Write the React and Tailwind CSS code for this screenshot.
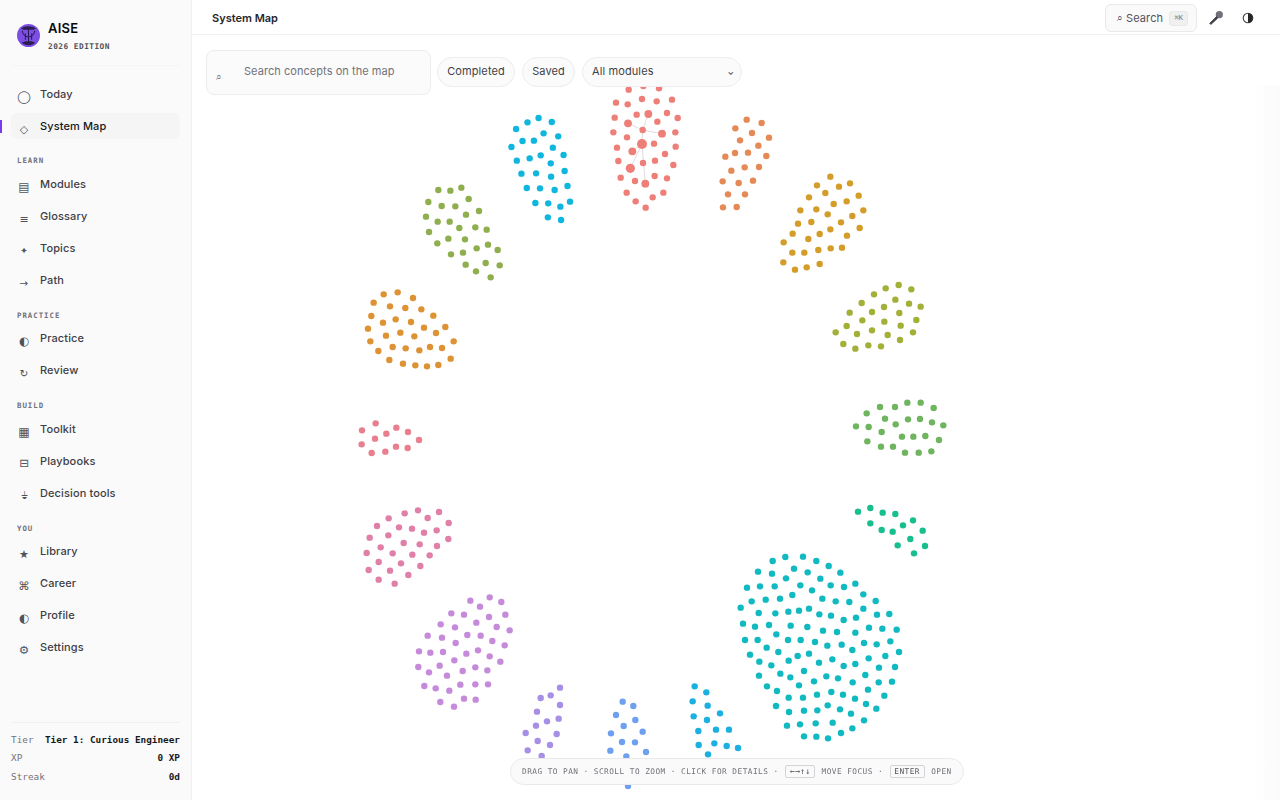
import React from 'react'

// dot clusters read off the map: origin x/y, scale x/y, then "x,y" pairs
const clusters = [
  { color: '#8fae4e', ox: 350, oy: 180, sx: 3, sy: 3, pts: '265,30 301,32 334,23 356,57 235,66 275,78 316,79 387,93 348,104 228,110 263,125 299,125 328,144 376,142 410,149 237,156 295,176 345,178 262,190 414,194 380,205 443,210 339,218 303,223 347,254 407,249 449,256 378,274 422,292' },
  { color: '#dd9233', ox: 350, oy: 180, sx: 3, sy: 3, pts: '101,343 143,337 189,354 71,368 120,379 166,384 214,388 250,407 64,408 137,418 99,428 183,426 222,443 286,441 54,446 151,458 108,467 193,469 258,459 61,484 311,484 128,501 167,505 208,511 240,501 276,504 85,513 118,540 159,551 196,556 231,559 265,555 302,536' },
  { color: '#e87f8e', ox: 350, oy: 180, sx: 3, sy: 3, pts: '77,730 139,743 36,751 174,756 109,761 75,776 207,780 35,793 138,800 173,804 106,815 65,819' },
  { color: '#e58a56', ox: 710, oy: 110, sx: 3, sy: 3, pts: '110,29 155,39 76,55 126,69 177,83 90,91 145,107 46,140 75,129 114,128 169,138 104,172 147,171 64,182 38,214 86,219 129,212 54,253 105,253 39,292 80,291' },
  { color: '#d49d2a', ox: 710, oy: 110, sx: 3, sy: 3, pts: '361,200 321,226 387,230 420,220 346,249 297,262 446,257 410,274 371,282 271,301 319,298 460,301 353,313 427,318 264,341 304,336 393,337 248,371 361,358 449,354 329,372 295,387 411,377 221,397 247,428 283,428 325,420 362,415 396,413 220,457 255,479 290,472 329,462' },
  { color: '#a3b037', ox: 710, oy: 110, sx: 3, sy: 3, pts: '566,525 527,535 604,538 492,553 556,569 455,579 597,581 632,590 522,591 419,608 486,606 568,609 457,631 523,635 619,630 410,648 572,647 486,661 377,667 441,672 609,667 533,675 570,690 400,702 475,706 513,709 436,716' },
  { color: '#10bac0', ox: 730, oy: 545, sx: 3, sy: 3, pts: '128,48 166,36 219,35 259,48 296,63 84,80 126,86 192,71 233,82 331,83 168,100 271,101 51,128 90,124 134,124 211,121 246,136 302,121 342,126 376,116 400,148 65,169 107,164 150,161 187,150 277,161 317,169 358,171 437,168 32,188 400,191 86,204 136,205 175,200 207,197 237,191 268,208 303,212 341,225 378,218 441,209 478,207 39,236 75,245 117,240 182,242 232,246 279,257 321,261 376,263 417,248 457,251 500,254 139,268 45,285 83,285 174,285 212,285 255,291 292,302 335,299 402,294 440,298 481,289 110,308 145,321 367,315 60,329 203,333 237,326 507,321 466,333 416,340 88,350 176,347 307,343 267,353 124,361 341,363 376,357 447,368 495,366 222,378 151,386 87,392 181,397 289,394 324,400 406,390 252,409 368,412 446,412 486,410 207,421 111,424 141,438 414,434 304,441 261,449 339,449 176,458 219,458 375,461 463,452 138,483 293,481 262,496 222,497 177,501 330,493 408,477 439,491 363,506 402,526 171,542 210,538 257,535 308,533 367,550 333,564 222,574 259,575 294,580' },
  { color: '#6fb45f', ox: 845, oy: 390, sx: 3, sy: 3, pts: '105,51 150,51 187,38 227,38 266,54 65,70 120,86 189,88 225,87 261,97 295,106 152,103 33,109 71,111 110,126 171,140 205,140 241,138 282,150 67,154 108,170 144,170 180,188 221,188 259,184' },
  { color: '#17bf8e', ox: 845, oy: 390, sx: 3, sy: 3, pts: '39,365 76,354 113,368 151,372 76,400 204,391 174,406 110,420 143,425 233,422 196,447 158,466 240,468 207,490' },
  { color: '#e07fa8', ox: 355, oy: 500, sx: 3, sy: 3, pts: '189,31 252,36 149,40 218,54 101,55 281,69 66,78 132,82 171,86 245,91 207,98 100,106 44,113 280,117 146,129 194,133 246,138 77,142 35,159 113,160 172,164 224,166 71,186 138,190 196,198 41,210 105,212 160,225 71,239 119,251' },
  { color: '#c58ada', ox: 355, oy: 500, sx: 3, sy: 3, pts: '404,292 346,302 439,306 375,320 289,340 327,344 451,344 402,351 364,368 257,373 300,382 425,381 464,391 337,405 377,407 218,407 261,413 412,423 302,429 449,436 192,454 226,458 264,456 369,451 334,461 404,469 298,481 436,485 254,497 190,501 361,502 397,511 323,513 222,517 276,527 316,554 361,553 399,553 208,558 242,565 283,572 327,596 362,599 256,606 297,620' },
  { color: '#0fb7de', ox: 200, oy: 40, sx: 2.8, sy: 3, pts: '948,234 917,247 985,246 885,267 962,280 1003,289 903,303 935,302 872,321 988,323 954,346 923,355 1018,345 887,362 982,370 900,401 941,400 1021,393 983,410 915,444 952,445 993,450 1029,438 939,489 975,490 1009,500 1036,485 974,532 1011,540' },
  { color: '#ee7f78', ox: 600, oy: 80, sx: 3, sy: 3, pts: '86,29 130,18 177,25 126,57 48,68 83,73 170,64 216,59 110,104 201,99 44,113 172,125 233,114 128,150 40,157 226,157 81,172 162,191 51,203 227,200 195,222 55,243 165,242 129,249 220,255 62,293 164,288 201,295 105,303 80,338 190,338 158,352 107,364 137,383' },
  { color: '#a78fe6', ox: 500, oy: 680, sx: 3, sy: 3, pts: '180,23 122,54 152,46 180,75 111,95 176,116 141,124 108,137 77,159 170,162 113,183 150,195 83,211 125,228' },
  { color: '#6fa0f0', ox: 500, oy: 680, sx: 3, sy: 3, pts: '368,65 400,78 348,105 406,120 371,138 333,160 428,155 366,186 405,187 331,212 438,216 379,229 384,318' },
  { color: '#1bb0e0', ox: 500, oy: 680, sx: 3, sy: 3, pts: '584,19 619,37 578,64 623,77 660,100 581,109 621,120 595,153 648,149 687,149 596,195 643,190 680,198 714,204 624,223' },
]

// larger nodes of the open module and the links between them
const hubs = [[145, 102, 3.9], [84, 130, 3.9], [186, 161, 3.9], [126, 192, 5], [97, 214, 3.9], [91, 265, 4.6], [136, 311, 3.9]]
const links = [[126, 192, 91, 265], [126, 192, 136, 311], [126, 192, 128, 150], [128, 150, 145, 102], [128, 150, 84, 130], [128, 150, 186, 161], [126, 192, 97, 214]]

const mono = "font-['DejaVu_Sans_Mono',monospace]"

const navTop = [
  { icon: '◯', label: 'Today', size: 'text-[12.5px]' },
  { icon: '◇', label: 'System Map', active: true, size: 'text-[11px]' },
]

const sections = [
  { title: 'LEARN', items: [
    { icon: '▤', label: 'Modules', size: 'text-[12px]' },
    { icon: '≡', label: 'Glossary', size: 'text-[11px]' },
    { icon: '✦', label: 'Topics', size: 'text-[9.5px]' },
    { icon: '→', label: 'Path', size: 'text-[10.5px]' },
  ] },
  { title: 'PRACTICE', items: [
    { icon: '◐', label: 'Practice', size: 'text-[11.5px]' },
    { icon: '↻', label: 'Review', size: 'text-[10.5px]' },
  ] },
  { title: 'BUILD', items: [
    { icon: '▦', label: 'Toolkit', size: 'text-[12px]' },
    { icon: '⊟', label: 'Playbooks', size: 'text-[11.5px]' },
    { icon: '⏚', label: 'Decision tools', size: 'text-[9.5px]' },
  ] },
  { title: 'YOU', items: [
    { icon: '★', label: 'Library', size: 'text-[11px]' },
    { icon: '⌘', label: 'Career', size: 'text-[11.5px]' },
    { icon: '◐', label: 'Profile', size: 'text-[11.5px]' },
    { icon: '⚙', label: 'Settings', size: 'text-[11.5px]' },
  ] },
]

const NavItem = ({ icon, label, active, size }) => (
  <div className={`relative flex items-center h-[26px] mb-[6px] pl-[7px] rounded-md ${active ? 'bg-[#f5f5f6] text-[#18181b]' : 'text-[#3f3f46]'}`}>
    {active && <span className="absolute left-[-11px] top-[7px] w-[2px] h-[13px] bg-[#7c3aed]" />}
    <span className={`w-[12px] mr-[10px] mt-[6px] flex justify-center font-['DejaVu_Sans',sans-serif] leading-none text-[#52525b] ${size}`}>{icon}</span>
    <span className="text-[11px] font-medium tracking-[0.01em]">{label}</span>
  </div>
)

const Logo = () => (
  <svg width="23" height="23" viewBox="0 0 22 22" className="shrink-0">
    <circle cx="11" cy="11" r="11" fill="#7c4ee4" />
    <path d="M4 4.5C7 1.5 15 1.5 18 4.5L15.5 5.5H6.5Z" fill="#2b1d52" />
    <path d="M4.5 18C8 21 14 21 17.5 18L14 16.5H8Z" fill="#2b1d52" />
    <path d="M11 3V17M5 6.5C5.5 10 8 12 11 12.5M17 6.5C16.5 10 14 12 11 12.5M8 9V15M14 9V15" stroke="#2b1d52" strokeWidth="1" fill="none" />
  </svg>
)

const Sidebar = () => (
  <aside className="w-[192px] shrink-0 h-full flex flex-col bg-[#fafafa] border-r border-[#f0f0f0] px-[11px]">
    <div className="flex items-center gap-2 pl-[6px] pt-[6px] h-[66px] border-b border-[#f5f5f5]">
      <Logo />
      <div className="mt-[1px]">
        <div className="text-[13px] font-semibold leading-4 tracking-[0.02em] text-[#09090b]">AISE</div>
        <div className={`${mono} mt-[5px] text-[7.8px] font-bold leading-3 tracking-[0.06em] text-[#52525b]`}>2026 EDITION</div>
      </div>
    </div>
    <div className="pt-[15px] mb-[2px]">
      {navTop.map((item) => <NavItem key={item.label} {...item} />)}
    </div>
    {sections.map((s) => (
      <div key={s.title} className="mt-[4px] mb-[2.5px]">
        <div className={`${mono} pl-[6px] h-[20px] pt-[4px] text-[7.4px] font-bold leading-3 tracking-[0.13em] text-[#71717a]`}>{s.title}</div>
        {s.items.map((item) => <NavItem key={item.label} {...item} />)}
      </div>
    ))}
    <div className="mt-auto mb-[14px] pt-[8px] border-t border-[#f0f0f0] text-[9.35px]">
      <div className={`${mono} flex justify-between leading-[18.5px]`}>
        <span className="text-[#71717a]">Tier</span>
        <span className="font-bold text-[#18181b]">Tier 1: Curious Engineer</span>
      </div>
      <div className={`${mono} flex justify-between leading-[18.5px]`}>
        <span className="text-[#71717a]">XP</span>
        <span className="font-bold text-[#18181b]">0 XP</span>
      </div>
      <div className={`${mono} flex justify-between leading-[18.5px]`}>
        <span className="text-[#71717a]">Streak</span>
        <span className="font-bold text-[#18181b]">0d</span>
      </div>
    </div>
  </aside>
)

const Topbar = () => (
  <header className="relative z-20 h-[35px] shrink-0 flex items-center bg-white border-b border-[#f0f0f0] pl-5 pr-[26px] pt-[2px]">
    <span className="mt-[1px] text-[11px] font-semibold text-[#27272a]">System Map</span>
    <div className="ml-auto flex items-center">
      <button className="w-[92px] h-7 flex items-center pl-[7px] rounded-md border border-[#e9e9eb] bg-[#fafafa] text-[#52525b]">
        <span className="w-[13px] text-[10px] leading-none font-['DejaVu_Sans',sans-serif]">⌕</span>
        <span className="mt-[1px] text-[11px] tracking-[0.01em]">Search</span>
        <span className={`${mono} ml-[6px] w-[19px] h-[15px] flex items-center justify-center rounded-[3px] bg-[#f0f0f1] border border-[#e9e9eb] text-[7px] text-[#71717a]`}>⌘K</span>
      </button>
      <svg width="16" height="16" viewBox="0 0 16 16" className="ml-[11px]">
        <circle cx="11.3" cy="4.7" r="3.6" fill="#71717a" />
        <path d="M8.6 6.6L1.8 13.4L2.8 14.4L9.6 8.2Z" fill="#3f3f46" stroke="#3f3f46" strokeWidth="1" />
      </svg>
      <svg width="12" height="12" viewBox="0 0 12 12" className="ml-[18px]">
        <circle cx="6" cy="6" r="4.8" fill="#fff" stroke="#3f3f46" strokeWidth="1.1" />
        <path d="M6 1.2A4.8 4.8 0 0 1 6 10.8Z" fill="#27272a" />
      </svg>
    </div>
  </header>
)

const Pill = ({ children, className = '' }) => (
  <div className={`h-[30px] mt-[7px] pb-[1px] flex items-center rounded-full border border-[#ececee] bg-[#fbfbfb] text-[11px] text-[#3f3f46] tracking-[0.01em] ${className}`}>
    {children}
  </div>
)

const MapDots = () => (
  <svg viewBox="192 35 1088 765" className="absolute inset-0 w-full h-full">
    {links.map((l, i) => (
      <line key={i} x1={600 + l[0] / 3} y1={80 + l[1] / 3} x2={600 + l[2] / 3} y2={80 + l[3] / 3} stroke="#e0dedd" strokeWidth="1" />
    ))}
    {clusters.map((c) =>
      c.pts.split(' ').map((p) => {
        const [x, y] = p.split(',').map(Number)
        return <circle key={c.color + p} cx={c.ox + x / c.sx} cy={c.oy + y / c.sy} r="3.2" fill={c.color} />
      })
    )}
    {hubs.map((h) => (
      <circle key={h[0]} cx={600 + h[0] / 3} cy={80 + h[1] / 3} r={h[2]} fill="#ee7f78" />
    ))}
  </svg>
)

const Kbd = ({ children, className = '' }) => (
  <span className={`h-[13px] flex items-center justify-center rounded-[2px] border border-[#d4d4d8] bg-[#fafafa] text-[#52525b] ${className}`}>{children}</span>
)

const HintBar = () => (
  <div className={`${mono} absolute z-10 left-[318px] bottom-[15px] w-[454px] h-[27px] flex items-center pl-[11px] gap-[6.5px] rounded-full border border-[#e9e9eb] bg-[#fafafa]/90 backdrop-blur-sm text-[7.75px] tracking-[0.06em] text-[#71717a]`}>
    <span>DRAG TO PAN · SCROLL TO ZOOM · CLICK FOR DETAILS ·</span>
    <Kbd className="w-[30px] text-[8.5px] tracking-normal">←→↑↓</Kbd>
    <span>MOVE FOCUS ·</span>
    <Kbd className="w-[35px]">ENTER</Kbd>
    <span>OPEN</span>
  </div>
)

const App = () => {
  return (
    <div className="flex w-[1280px] h-[800px] overflow-hidden bg-white font-['Inter',sans-serif]">
      <Sidebar />
      <main className="relative flex-1 flex flex-col min-w-0">
        <Topbar />
        <div className="relative flex-1">
          <MapDots />
          <div className="absolute right-0 top-[25px] bottom-0 w-[30px] bg-gradient-to-r from-white/0 to-[#fbfbfb]" />
          <div className="relative z-10 h-[50px] flex items-start gap-[7px] pl-[14px] pt-[15px] bg-white">
            <div className="w-[225px] -mr-px h-[45px] pb-[3px] flex items-center pl-[9px] rounded-lg border border-[#ececee] bg-[#fbfbfb]">
              <span className="w-[28px] mt-[12px] text-[10px] leading-none text-[#71717a] font-['DejaVu_Sans',sans-serif]">⌕</span>
              <span className="text-[11px] tracking-[0.005em] text-[#71717a]">Search concepts on the map</span>
            </div>
            <Pill className="w-[78px] justify-center">Completed</Pill>
            <Pill className="w-[53px] justify-center">Saved</Pill>
            <Pill className="w-[160px] pl-[9px] pr-[7px] justify-between">
              <span>All modules</span>
              <span className="text-[8px] font-bold leading-none text-[#3f3f46]">⌄</span>
            </Pill>
          </div>
          <HintBar />
        </div>
      </main>
    </div>
  )
}

export default App
